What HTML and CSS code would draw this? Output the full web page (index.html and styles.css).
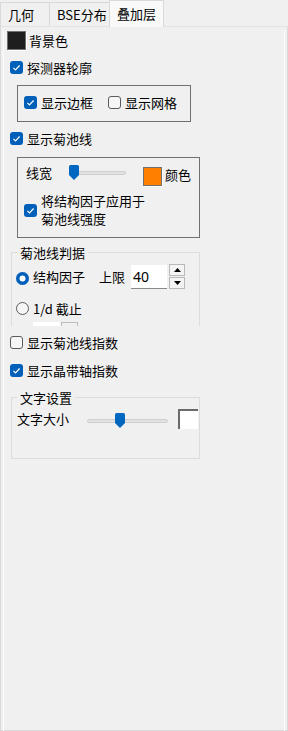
FILE: index.html
```html
<!DOCTYPE html>
<html>
<head>
<meta charset="utf-8">
<link rel="stylesheet" href="styles.css">
</head>
<body>
<div class="tabs">
  <div class="tab t1">几何</div>
  <div class="tab t2">BSE分布</div>
  <div class="tab t3 active">叠加层</div>
</div>
<div class="pane">
  <div class="inner">
    <div class="bg-row">
      <span class="swatch dark"></span><span class="lbl">背景色</span>
    </div>

    <div class="chk-row r-outline">
      <span class="cb on"><svg viewBox="0 0 13 13"><path d="M3.4 6.9 L5.5 8.9 L9.6 4.5" /></svg></span><span class="lbl">探测器轮廓</span>
    </div>

    <div class="box g1">
      <div class="chk-row">
        <span class="cb on"><svg viewBox="0 0 13 13"><path d="M3.4 6.9 L5.5 8.9 L9.6 4.5" /></svg></span><span class="lbl">显示边框</span>
        <span class="cb off second"></span><span class="lbl">显示网格</span>
      </div>
    </div>

    <div class="chk-row r-kikuchi">
      <span class="cb on"><svg viewBox="0 0 13 13"><path d="M3.4 6.9 L5.5 8.9 L9.6 4.5" /></svg></span><span class="lbl">显示菊池线</span>
    </div>

    <div class="box g2">
      <div class="lw-row">
        <span class="lbl lw">线宽</span>
        <div class="slider s1">
          <div class="track"></div>
          <svg class="thumb" style="left:0px" viewBox="0 0 10 15"><path d="M1.5 0 H8.5 Q10 0 10 1.5 V10 L5 15 L0 10 V1.5 Q0 0 1.5 0 Z"/></svg>
        </div>
        <span class="swatch orange"></span>
        <span class="lbl color-lbl">颜色</span>
      </div>
      <div class="sf-row">
        <span class="cb on"><svg viewBox="0 0 13 13"><path d="M3.4 6.9 L5.5 8.9 L9.6 4.5" /></svg></span>
        <span class="lbl two">将结构因子应用于<br>菊池线强度</span>
      </div>
    </div>

    <div class="gb g3">
      <span class="gb-title">菊池线判据</span>
      <div class="rad-row r1">
        <span class="radio on"></span><span class="lbl">结构因子</span>
        <span class="lbl limit">上限</span>
        <span class="spin-input">40</span>
        <span class="spin-btns">
          <span class="sbtn"><svg viewBox="0 0 7 4"><path d="M0 4 L3.5 0 L7 4 Z"/></svg></span>
          <span class="sbtn"><svg viewBox="0 0 7 4"><path d="M0 0 L3.5 4 L7 0 Z"/></svg></span>
        </span>
      </div>
      <div class="rad-row r2">
        <span class="radio off"></span><span class="lbl">1/d 截止</span>
      </div>
      <div class="clip-row">
        <span class="clip-input"></span><span class="clip-btn"></span>
      </div>
    </div>

    <div class="chk-row r-kidx">
      <span class="cb off"></span><span class="lbl">显示菊池线指数</span>
    </div>

    <div class="chk-row r-zidx">
      <span class="cb on"><svg viewBox="0 0 13 13"><path d="M3.4 6.9 L5.5 8.9 L9.6 4.5" /></svg></span><span class="lbl">显示晶带轴指数</span>
    </div>

    <div class="gb g4">
      <span class="gb-title">文字设置</span>
      <div class="ts-row">
        <span class="lbl">文字大小</span>
        <div class="slider s2">
          <div class="track"></div>
          <svg class="thumb" style="left:28px" viewBox="0 0 10 15"><path d="M1.5 0 H8.5 Q10 0 10 1.5 V10 L5 15 L0 10 V1.5 Q0 0 1.5 0 Z"/></svg>
        </div>
        <span class="white-box"></span>
      </div>
    </div>
  </div>
</div>
</body>
</html>
```

FILE: styles.css
```css
* { box-sizing: border-box; }
html, body {
  margin: 0;
  padding: 0;
  width: 288px;
  height: 731px;
  overflow: hidden;
  background: #f0f0f0;
  font-family: "Noto Sans CJK SC", "Noto Sans", sans-serif;
  font-size: 13px;
  color: #000;
}

.tabs {
  display: flex;
  align-items: flex-start;
  height: 26px;
}
.tab {
  height: 24px;
  margin-top: 2px;
  border: 1px solid #d9d9d9;
  border-bottom: none;
  background: #f0f0f0;
  padding-left: 7px;
  line-height: 24px;
  white-space: nowrap;
}
.t1 { width: 50px; }
.t2 { width: 61px; margin-left: -1px; }
.t3 { width: 55px; margin-left: -1px; }
.tab.active {
  height: 27px;
  margin-top: 0;
  background: #f9f9f9;
  line-height: 26px;
  position: relative;
  z-index: 1;
}

.pane {
  height: 705px;
  border: 1px solid #dadada;
  border-top-color: #e3e3e3;
  padding: 0 2px 2px 2px;
}
.inner {
  height: 702px;
  border: 1px solid #fbfbfb;
  border-top: none;
}

.lbl { white-space: nowrap; }

/* colour swatches */
.swatch {
  display: block;
  width: 19px;
  height: 19px;
  border: 1px solid #707070;
  box-shadow: 1px 1px 0 #ffffff;
}
.swatch.dark { background: #1e1e1e; }
.swatch.orange { background: #ff8000; }

.bg-row {
  display: flex;
  align-items: center;
  height: 19px;
  margin: 4px 0 0 3px;
  line-height: 19px;
}
.bg-row .lbl { margin-left: 3px; }

/* checkboxes */
.chk-row {
  display: flex;
  align-items: center;
  height: 13px;
  line-height: 13px;
}
.cb {
  display: block;
  flex: none;
  width: 13px;
  height: 13px;
  border-radius: 3px;
  margin-right: 4px;
}
.cb.on { background: #005fb8; }
.cb.on svg { display: block; width: 13px; height: 13px; }
.cb.on path { fill: none; stroke: #ffffff; stroke-width: 1.2; }
.cb.off { border: 1px solid #5b5b5b; background: #f6f6f6; }
.cb.second { margin-left: 15px; }

.r-outline { margin: 11px 0 0 6px; }
.r-kikuchi { margin: 10px 0 0 6px; }
.r-kidx { margin: 10px 0 0 6px; }
.r-zidx { margin: 15px 0 0 6px; }

/* dark group boxes */
.box { border: 1px solid #707070; }
.g1 {
  margin: 11px 0 0 13px;
  width: 174px;
  height: 37px;
  padding: 10px 0 0 6px;
}
.g2 {
  margin: 12px 0 0 13px;
  width: 183px;
  height: 81px;
  padding: 7px 0 0 6px;
}

.lw-row {
  display: flex;
  align-items: flex-start;
  height: 22px;
}
.lw { margin-left: 2px; line-height: 16px; }

.slider {
  position: relative;
  flex: none;
  height: 16px;
}
.s1 { width: 57px; margin-left: 17px; }
.s2 { width: 81px; margin-left: 18px; }
.track {
  margin-top: 6px;
  height: 4px;
  border: 1px solid #cfcfcf;
  background: #e2e2e2;
  border-radius: 2px;
}
.thumb {
  position: absolute;
  top: 0;
  width: 10px;
  height: 15px;
}
.thumb path { fill: #0067c0; }

.lw-row .swatch { margin: 2px 0 0 17px; }
.color-lbl { margin-left: 3px; line-height: 20px; }

.sf-row {
  display: flex;
  align-items: center;
  margin-top: 5px;
}
.two { line-height: 18px; }

/* light group boxes with titles */
.gb {
  border: 1px solid #dcdcdc;
  margin-left: 7px;
  width: 189px;
}
.gb-title {
  display: block;
  width: max-content;
  margin: -9px 0 0 5px;
  padding: 0 3px;
  background: #f0f0f0;
  line-height: 18px;
  height: 18px;
}
.g3 {
  margin-top: 14px;
  height: 74px;
  border-bottom: none;
}
.rad-row {
  display: flex;
  align-items: center;
  padding-left: 4px;
}
.r1 { margin-top: 2px; height: 25px; }
.r2 { margin-top: 9px; height: 21px; }
.radio {
  display: block;
  flex: none;
  width: 13px;
  height: 13px;
  border-radius: 50%;
  margin-right: 4px;
}
.r1 .radio { margin-top: 4px; }
.radio.on {
  background: #005fb8;
  box-shadow: inset 0 0 0 3.5px #005fb8, inset 0 0 0 13px #ffffff;
}
.radio.off { border: 1px solid #5b5b5b; background: #f6f6f6; }
.limit { margin-left: 14px; }
.spin-input {
  display: block;
  margin-left: 6px;
  width: 36px;
  height: 24px;
  background: #ffffff;
  border-bottom: 1px solid #8a8a8a;
  padding-left: 2px;
  font-family: "Noto Sans", "Noto Sans CJK SC", sans-serif;
  font-size: 14px;
  line-height: 23px;
}
.spin-btns {
  display: flex;
  flex-direction: column;
  gap: 1px;
  margin-left: 2px;
}
.sbtn {
  display: flex;
  align-items: center;
  justify-content: center;
  width: 16px;
  height: 12px;
  border: 1px solid #b9b9b9;
  background: #f4f4f4;
}
.sbtn svg { width: 7px; height: 4px; display: block; }
.sbtn path { fill: #000; }

.clip-row {
  display: flex;
  margin: 3px 0 0 21px;
  height: 4px;
  overflow: hidden;
}
.clip-input { display: block; width: 27px; height: 4px; background: #fff; }
.clip-btn { display: block; width: 17px; height: 4px; margin-left: 1px; border: 1px solid #bdbdbd; border-bottom: none; }

.g4 {
  margin-top: 20px;
  height: 62px;
}
.ts-row {
  display: flex;
  align-items: flex-start;
  margin-top: 2px;
  padding-left: 5px;
  height: 20px;
}
.ts-row .lbl { line-height: 20px; }
.ts-row .slider { margin-top: 4px; }
.white-box {
  display: block;
  flex: none;
  margin-left: 10px;
  width: 20px;
  height: 20px;
  background: #ffffff;
  border-top: 2px solid #6a6a6a;
  border-left: 2px solid #6a6a6a;
}
```
